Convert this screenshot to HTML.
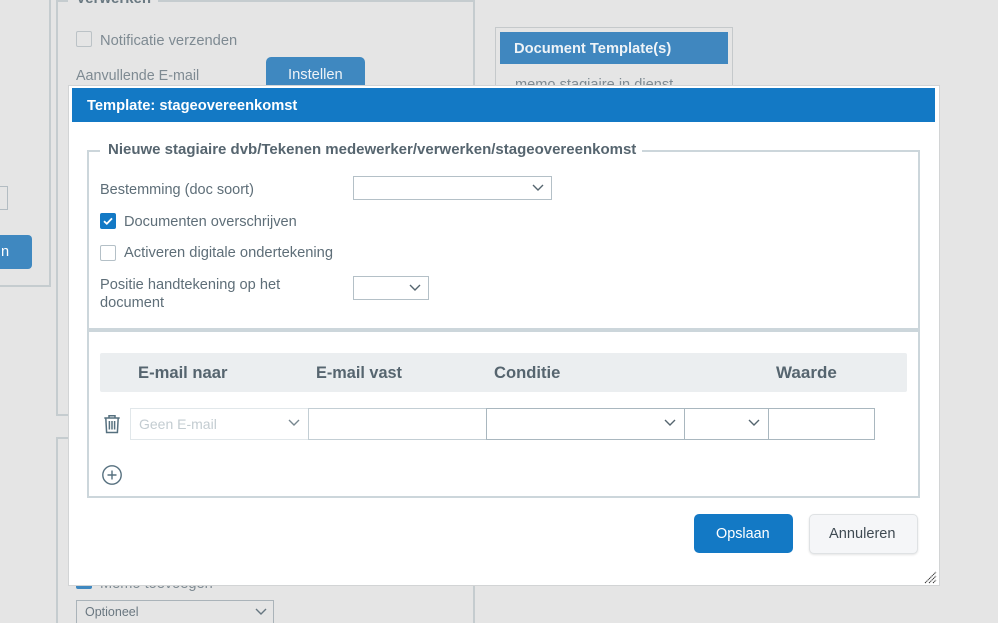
<!DOCTYPE html>
<html><head><meta charset="utf-8"><style>
html,body{margin:0;padding:0;width:998px;height:623px;overflow:hidden}
body{background:#e5e5e5;font-family:"Liberation Sans",sans-serif;}
#w{position:absolute;left:0;top:0;width:998px;height:623px;overflow:hidden;background:#e5e5e5}
.a{position:absolute;box-sizing:border-box}
.t{position:absolute;white-space:nowrap;font-size:14.6px;line-height:18px;color:#5e6e78}
.b{font-weight:bold}
.bg{color:#7e8a92}
svg{position:absolute;overflow:visible}
</style></head><body><div id="w">
<!-- background -->
<div class="a" style="left:-10px;top:-10px;width:61px;height:297px;border:2px solid #c5cccf"></div>
<div class="a" style="left:-10px;top:186px;width:18px;height:24px;border:1px solid #b3bcc2"></div>
<div class="a" style="left:-10px;top:235px;width:42px;height:34px;background:#3f88c0;border-radius:4px"></div>
<div class="t" style="left:1px;top:243px;color:#fff">n</div>
<div class="a" style="left:56px;top:0;width:419px;height:416px;border:2px solid #c5cccf"></div>
<div class="a" style="left:68px;top:-5px;width:90px;height:10px;background:#e5e5e5"></div>
<div class="t b" style="left:76px;top:-10px;font-size:15px;color:#6a7982">Verwerken</div>
<div class="a" style="left:76px;top:31px;width:16px;height:16px;border:1px solid #bbc2c6;border-radius:2px"></div>
<div class="t bg" style="left:100px;top:32px;font-size:14.7px">Notificatie verzenden</div>
<div class="t bg" style="left:76px;top:67px;font-size:14.3px">Aanvullende E-mail</div>
<div class="a" style="left:266px;top:57px;width:99px;height:40px;background:#3f88c0;border-radius:5px"></div>
<div class="t" style="left:288px;top:66px;color:#eef3f7;font-size:14.7px">Instellen</div>
<div class="a" style="left:56px;top:437px;width:419px;height:200px;border:2px solid #c5cccf"></div>
<div class="a" style="left:76px;top:573px;width:16px;height:16px;background:#3f88c0;border-radius:2px"></div>
<div class="t bg" style="left:100px;top:575px">Memo toevoegen</div>
<div class="a" style="left:76px;top:600px;width:198px;height:30px;border:1px solid #aab3b9"></div>
<div class="t" style="left:85px;top:603px;font-size:12.5px;color:#6a7780">Optioneel</div>
<svg style="left:255px;top:608px" width="12" height="8"><path d="M1 1l5 5 5-5" fill="none" stroke="#667680" stroke-width="1.4"/></svg>
<div class="a" style="left:495px;top:27px;width:238px;height:90px;border:1px solid #c5c9cb"></div>
<div class="a" style="left:500px;top:32px;width:228px;height:32px;background:#4087bf"></div>
<div class="t b" style="left:514px;top:40px;color:#eef3f7;font-size:14.7px">Document Template(s)</div>
<div class="t bg" style="left:515px;top:76px;font-size:14.6px">memo stagiaire in dienst</div>
<!-- modal -->
<div class="a" style="left:68px;top:85px;width:872px;height:501px;background:#fff;border:1px solid #d2d4d5"></div>
<div class="a" style="left:72px;top:88px;width:863px;height:34px;background:#1379c5"></div>
<div class="t b" style="left:87px;top:97px;color:#fff;font-size:14.7px">Template: stageovereenkomst</div>
<div class="a" style="left:87px;top:150px;width:833px;height:348px;border:2px solid #ccd6db"></div>
<div class="a" style="left:100px;top:142px;width:542px;height:16px;background:#fff"></div>
<div class="t b" style="left:108px;top:141px;color:#56656f;font-size:15px">Nieuwe stagiaire dvb/Tekenen medewerker/verwerken/stageovereenkomst</div>
<div class="t" style="left:100px;top:181px;font-size:14.5px">Bestemming (doc soort)</div>
<div class="a" style="left:353px;top:176px;width:199px;height:24px;border:1px solid #b4c0c7"></div>
<svg style="left:532px;top:184px" width="12" height="8"><path d="M1 1l5 5 5-5" fill="none" stroke="#55656f" stroke-width="1.4"/></svg>
<div class="a" style="left:100px;top:213px;width:16px;height:16px;background:#1379c5;border-radius:2px"></div>
<svg style="left:100px;top:213px" width="16" height="16"><path d="M4 8.2l2.8 2.6L12 5.4" fill="none" stroke="#fff" stroke-width="1.8"/></svg>
<div class="t" style="left:124px;top:213px">Documenten overschrijven</div>
<div class="a" style="left:100px;top:245px;width:16px;height:16px;border:1px solid #b4c0c7;border-radius:2px"></div>
<div class="t" style="left:124px;top:244px;font-size:14.7px">Activeren digitale ondertekening</div>
<div class="t" style="left:100px;top:276px">Positie handtekening op het</div>
<div class="t" style="left:100px;top:294px">document</div>
<div class="a" style="left:353px;top:276px;width:76px;height:24px;border:1px solid #b4c0c7"></div>
<svg style="left:409px;top:284px" width="12" height="8"><path d="M1 1l5 5 5-5" fill="none" stroke="#55656f" stroke-width="1.4"/></svg>
<div class="a" style="left:88px;top:328px;width:831px;height:4px;background:#ccd6db"></div>
<!-- table -->
<div class="a" style="left:100px;top:353px;width:807px;height:39px;background:#ebeef0;border-radius:2px"></div>
<div class="t b" style="left:138px;top:364px;font-size:16.6px;color:#56656f">E-mail naar</div>
<div class="t b" style="left:316px;top:364px;font-size:16.3px;color:#56656f">E-mail vast</div>
<div class="t b" style="left:494px;top:364px;font-size:16.6px;color:#56656f">Conditie</div>
<div class="t b" style="left:776px;top:364px;font-size:17px;color:#56656f">Waarde</div>
<svg style="left:104px;top:414px" width="16" height="20" viewBox="0 0 16 20"><path d="M.3 4h15.4M5 4V1.7h6V4M1.8 4l.8 14.5h10.8L14.2 4M5.4 7v8.5M8 7v8.5M10.6 7v8.5" fill="none" stroke="#56707f" stroke-width="1.5"/></svg>
<div class="a" style="left:130px;top:408px;width:179px;height:32px;border:1px solid #e1e7ea"></div>
<div class="t" style="left:139px;top:415px;color:#c3ccd1;font-size:14px">Geen E-mail</div>
<svg style="left:288px;top:419px" width="12" height="8"><path d="M1 1l5 5 5-5" fill="none" stroke="#78878f" stroke-width="1.4"/></svg>
<div class="a" style="left:308px;top:408px;width:179px;height:32px;border:1px solid #c3ced4"></div>
<div class="a" style="left:486px;top:408px;width:199px;height:32px;border:1px solid #a9b7bf"></div>
<svg style="left:664px;top:419px" width="12" height="8"><path d="M1 1l5 5 5-5" fill="none" stroke="#55656f" stroke-width="1.4"/></svg>
<div class="a" style="left:684px;top:408px;width:85px;height:32px;border:1px solid #a9b7bf"></div>
<svg style="left:748px;top:419px" width="12" height="8"><path d="M1 1l5 5 5-5" fill="none" stroke="#55656f" stroke-width="1.4"/></svg>
<div class="a" style="left:768px;top:408px;width:107px;height:32px;border:1px solid #a9b7bf"></div>
<svg style="left:102px;top:465px" width="20" height="20" viewBox="0 0 20 20"><circle cx="10" cy="10" r="9.2" fill="none" stroke="#56707f" stroke-width="1.4"/><path d="M10 5.5v9M5.5 10h9" stroke="#56707f" stroke-width="1.4"/></svg>
<!-- buttons -->
<div class="a" style="left:694px;top:514px;width:99px;height:39px;background:#1379c5;border-radius:5px"></div>
<div class="t" style="left:716px;top:525px;color:#fff;font-size:14.4px">Opslaan</div>
<div class="a" style="left:809px;top:514px;width:109px;height:40px;background:#f5f6f8;border:1px solid #dfe2e4;border-radius:5px;box-shadow:0 1px 2px #e4e4e4"></div>
<div class="t" style="left:829px;top:525px;color:#3f4a52;font-size:14.6px">Annuleren</div>
<svg style="left:924px;top:571px" width="13" height="13"><path d="M1 12L12 1M5 12l7-7M9 12l3-3" stroke="#333" stroke-width="1" stroke-dasharray="1.4 .5" fill="none"/></svg>
</div></body></html>
